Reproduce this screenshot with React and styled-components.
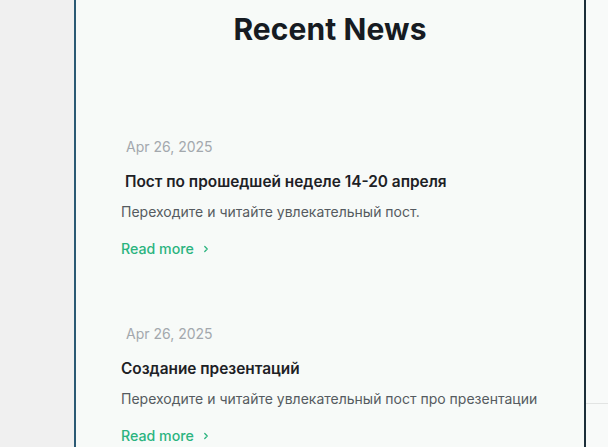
import React from "react";
import styled, { createGlobalStyle } from "styled-components";

const GlobalStyle = createGlobalStyle`
  html, body {
    margin: 0;
    padding: 0;
    background: #f0f0f0;
    font-family: Inter, "Noto Sans", sans-serif;
    overflow: hidden;
  }
`;

const posts = [
  {
    date: "Apr 26, 2025",
    title: "Пост по прошедшей неделе 14-20 апреля",
    text: "Переходите и читайте увлекательный пост.",
    indent: true,
  },
  {
    date: "Apr 26, 2025",
    title: "Создание презентаций",
    text: "Переходите и читайте увлекательный пост про презентации",
    indent: false,
  },
];

export default function App() {
  return (
    <Page>
      <GlobalStyle />
      <Gutter />
      <Panel>
        <Heading>Recent News</Heading>
        <List>
          {posts.map((p, i) => (
            <Post key={i}>
              <DateLine>{p.date}</DateLine>
              <Title $indent={p.indent}>{p.title}</Title>
              <Excerpt>{p.text}</Excerpt>
              <ReadMore href="#">
                Read more
                <Chevron viewBox="0 0 24 24">
                  <path d="M9 6l6 6-6 6" />
                </Chevron>
              </ReadMore>
            </Post>
          ))}
        </List>
      </Panel>
      <Aside>
        <Rule />
      </Aside>
    </Page>
  );
}

const Page = styled.div`
  display: flex;
  height: 447px;
  width: 608px;
`;

const Gutter = styled.div`
  width: 74px;
  flex-shrink: 0;
  background: #f0f0f0;
`;

const Panel = styled.main`
  flex-shrink: 0;
  background: #f7faf8;
  border-left: 2px solid #2b5a74;
  border-right: 2px solid #1c2f3a;
  padding: 11px 0 0 45px;
  box-sizing: content-box;
  width: 463px;
`;

const Heading = styled.h2`
  margin: 0 0 0 -45px;
  text-align: center;
  font-size: 30px;
  line-height: 36px;
  font-weight: 700;
  color: #161b22;
  letter-spacing: 0.1px;
`;

const List = styled.div`
  display: flex;
  flex-direction: column;
  gap: 65px;
  margin-top: 90px;
`;

const Post = styled.article`
  display: flex;
  flex-direction: column;
`;

const DateLine = styled.div`
  padding-left: 5px;
  font-size: 14px;
  line-height: 20px;
  color: #a3a8ad;
`;

const Title = styled.h3`
  margin: 13px 0 0;
  padding-left: ${(p) => (p.$indent ? "4px" : "0")};
  font-size: 15.4px;
  line-height: 24px;
  font-weight: 600;
  color: #1d2125;
`;

const Excerpt = styled.p`
  margin: 8px 0 0;
  font-size: 14px;
  line-height: 20px;
  color: #555b60;
`;

const ReadMore = styled.a`
  display: inline-flex;
  align-items: center;
  gap: 7px;
  margin-top: 17px;
  font-size: 14.2px;
  line-height: 20px;
  font-weight: 500;
  color: #2bb47f;
  text-decoration: none;
`;

const Chevron = styled.svg`
  width: 10px;
  height: 10px;
  fill: none;
  stroke: currentColor;
  stroke-width: 3;
  stroke-linecap: round;
  stroke-linejoin: round;
`;

const Aside = styled.div`
  flex: 1;
  background: #f8faf9;
  padding-top: 403px;
`;

const Rule = styled.div`
  height: 1px;
  background: #e2e4e3;
`;
